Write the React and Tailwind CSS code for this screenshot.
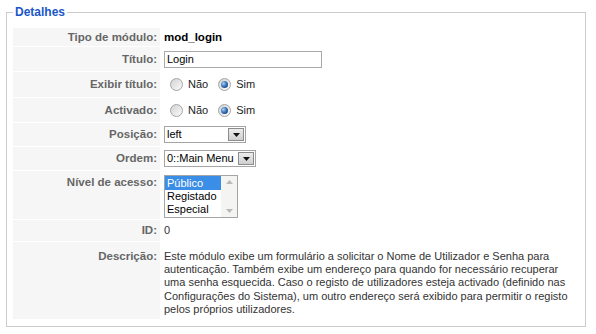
import React from 'react'

function Radio({ checked }) {
  return (
    <span className="inline-flex h-[13px] w-[13px] shrink-0 items-center justify-center rounded-full border border-[#a4a4a4] bg-[linear-gradient(135deg,#d2d2d2,#fbfbfb)]">
      {checked && (
        <span className="h-[7px] w-[7px] rounded-full bg-[radial-gradient(circle_at_35%_35%,#a6d0f5,#2b63aa_55%,#0f3b75)]" />
      )}
    </span>
  )
}

function RadioPair() {
  return (
    <div className="flex items-center pl-[6px] text-[11px] text-[#222]">
      <Radio />
      <span className="ml-[5px] mr-[10px]">Não</span>
      <Radio checked />
      <span className="ml-[5px]">Sim</span>
    </div>
  )
}

function DropArrow() {
  return (
    <span className="flex h-[13px] w-[16px] items-center justify-center border border-[#8c8c8c] bg-[linear-gradient(#ececec,#cfcfcf)]">
      <svg width="7" height="4" viewBox="0 0 7 4">
        <path d="M0 0h7L3.5 4z" fill="#111" />
      </svg>
    </span>
  )
}

function Row({ label, h, top, children }) {
  return (
    <div className={`flex gap-px ${h}`}>
      <div
        className={`flex w-[147px] shrink-0 justify-end bg-[#f6f6f6] pr-[3px] text-[11.5px] font-bold text-[#666] ${
          top ? 'items-start ' + top : 'items-center'
        }`}
      >
        {label}
      </div>
      <div className={`flex flex-1 pl-[3px] ${top ? 'items-start' : 'items-center'}`}>{children}</div>
    </div>
  )
}

export default function App() {
  return (
    <div className="h-[334px] w-[596px] bg-white pt-[5px] font-['Liberation_Sans',Arial,sans-serif] leading-[13px]">
      <fieldset className="ml-[6px] w-[580px] border border-[#cccccc] px-[6px] pt-[9px] pb-[7px]">
        <legend className="ml-0 px-[2px] text-[12px] font-bold leading-[14px] text-[#1a57c6]">
          Detalhes
        </legend>

        <div className="flex flex-col gap-px">
          <Row label="Tipo de módulo:" h="h-[18px]">
            <span className="text-[11.5px] font-bold text-black">mod_login</span>
          </Row>

          <Row label="Título:" h="h-[24px]">
            <div className="flex h-[17px] w-[158px] items-center border border-[#a9a9a9] bg-white px-[2px] text-[11px] text-black">
              Login
            </div>
          </Row>

          <Row label="Exibir título:" h="h-[25px]">
            <RadioPair />
          </Row>

          <Row label="Activado:" h="h-[24px]">
            <RadioPair />
          </Row>

          <Row label="Posição:" h="h-[23px]">
            <div className="flex h-[17px] w-[82px] items-center justify-between border border-[#a5a5a5] bg-white pl-[2px] pr-px text-[11px] text-black">
              <span>left</span>
              <DropArrow />
            </div>
          </Row>

          <Row label="Ordem:" h="h-[23px]">
            <div className="flex h-[17px] w-[92px] items-center justify-between border border-[#a5a5a5] bg-white pl-[2px] pr-px text-[11px] text-black">
              <span>0::Main Menu</span>
              <DropArrow />
            </div>
          </Row>

          <Row label="Nível de acesso:" h="h-[48px]" top="pt-[5px]">
            <div className="mt-[4px] flex h-[43px] w-[74px] border border-[#a5a5a5] bg-white text-[11px] text-black">
              <div className="flex flex-1 flex-col">
                <span className="h-[14px] bg-[#3a8ee6] pl-[2px] leading-[14px] text-white">Público</span>
                <span className="h-[13px] pl-[2px]">Registado</span>
                <span className="h-[13px] pl-[2px]">Especial</span>
              </div>
              <div className="flex w-[16px] flex-col items-center justify-between bg-[#f4f4f2] py-[4px]">
                <svg width="7" height="4" viewBox="0 0 7 4">
                  <path d="M0 4h7L3.5 0z" fill="#b9b9b9" />
                </svg>
                <svg width="7" height="4" viewBox="0 0 7 4">
                  <path d="M0 0h7L3.5 4z" fill="#b9b9b9" />
                </svg>
              </div>
            </div>
          </Row>

          <Row label="ID:" h="h-[21px]">
            <span className="text-[11px] text-[#333]">0</span>
          </Row>

          <Row label="Descrição:" h="h-[77px]" top="pt-[8px]">
            <p className="pt-[8px] text-[11px] leading-[13.2px] whitespace-nowrap text-[#333]">
              Este módulo exibe um formulário a solicitar o Nome de Utilizador e Senha para
              <br />
              autenticação. Também exibe um endereço para quando for necessário recuperar
              <br />
              uma senha esquecida. Caso o registo de utilizadores esteja activado (definido nas
              <br />
              Configurações do Sistema), um outro endereço será exibido para permitir o registo
              <br />
              pelos próprios utilizadores.
            </p>
          </Row>
        </div>
      </fieldset>
    </div>
  )
}
